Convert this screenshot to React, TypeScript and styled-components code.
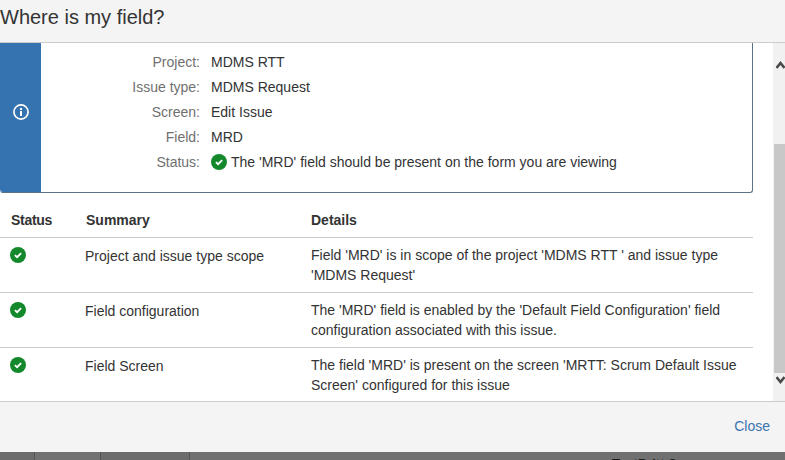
import React from 'react';
import styled, { createGlobalStyle } from 'styled-components';

const GlobalStyle = createGlobalStyle`
  html, body {
    margin: 0;
    padding: 0;
    height: 460px;
    overflow: hidden;
    background: #6f6f6f;
    font-family: "Liberation Sans", Arial, sans-serif;
  }
`;

const Dialog = styled.div`
  width: 785px;
  height: 460px;
  display: flex;
  flex-direction: column;
  overflow: hidden;
`;

const Header = styled.header`
  height: 42px;
  flex: none;
  background: #f4f4f4;
  border-bottom: 1px solid #cccccc;
  display: flex;
  align-items: flex-start;
`;

const Title = styled.h1`
  margin: 0;
  font-size: 20px;
  font-weight: 400;
  line-height: 34px;
  color: #333333;
`;

const Body = styled.div`
  height: 358px;
  flex: none;
  display: flex;
  background: #ffffff;
`;

const Content = styled.main`
  width: 753px;
  flex: none;
`;

const Message = styled.section`
  height: 150px;
  box-sizing: border-box;
  display: flex;
  border: solid #5b7186;
  border-width: 0 1px 1px 0;
  border-radius: 0 0 3px 3px;
`;

const MessageIcon = styled.div`
  width: 41px;
  flex: none;
  box-sizing: border-box;
  padding: 0 0 12px 1px;
  background: #3572b0;
  border-radius: 0 0 0 3px;
  display: flex;
  align-items: center;
  justify-content: center;
  color: #ffffff;
`;

const Facts = styled.dl`
  margin: 6px 0 0;
  display: grid;
  grid-template-columns: 159px 1fr;
  grid-auto-rows: 25px;
  column-gap: 11px;
  align-items: center;
  font-size: 14px;
`;

const FactLabel = styled.dt`
  text-align: right;
  color: #707070;
`;

const FactValue = styled.dd`
  margin: 0;
  color: #333333;
  display: flex;
  align-items: center;
  gap: 4px;
`;

const Table = styled.table`
  width: 753px;
  margin-top: 17px;
  border-collapse: collapse;
  table-layout: fixed;
  font-size: 14px;
  color: #333333;
`;

const HeadCell = styled.th<{ $tight?: boolean }>`
  height: 27px;
  box-sizing: border-box;
  padding: 0 0 7px 11px;
  text-align: left;
  vertical-align: top;
  line-height: 20px;
  font-weight: 700;
  letter-spacing: ${({ $tight }) => ($tight ? '-0.3px' : 'normal')};
  border-bottom: 1px solid #cccccc;
`;

const Row = styled.tr`
  border-bottom: 1px solid #cccccc;

  &:last-child {
    border-bottom: 0;
  }
`;

const Cell = styled.td<{ $indent?: number; $top?: number }>`
  height: 55px;
  box-sizing: border-box;
  padding: ${({ $top }) => $top ?? 7}px 10px 0 ${({ $indent }) => $indent ?? 10}px;
  vertical-align: top;
  line-height: 20px;

  svg {
    display: block;
    margin-top: 2px;
  }
`;

const Scrollbar = styled.div`
  margin-left: 20px;
  width: 12px;
  flex: none;
  box-sizing: border-box;
  padding-left: 1px;
  background: #f1f1f1;
  color: #4a4a4a;
  display: flex;
  flex-direction: column;
`;

const ScrollArrow = styled.div<{ $height: number; $top: number }>`
  height: ${({ $height }) => $height}px;
  flex: none;
  box-sizing: border-box;
  padding: ${({ $top }) => $top}px 0 0 2px;

  svg {
    display: block;
  }
`;

const ScrollThumb = styled.div`
  height: 229px;
  flex: none;
  background: #c8c8c8;
`;

const Footer = styled.footer`
  height: 51px;
  flex: none;
  box-sizing: border-box;
  background: #f4f4f4;
  border-top: 1px solid #cccccc;
  display: flex;
  align-items: center;
  justify-content: flex-end;
  padding: 0 15px 3px 0;
`;

const CloseLink = styled.a`
  font-size: 14px;
  color: #3b73af;
  text-decoration: none;
`;

const Backdrop = styled.div`
  flex: 1;
  display: flex;
  background: #707070;
  overflow: hidden;
`;

const BackdropCell = styled.div<{ $width: number; $tone: string }>`
  width: ${({ $width }) => $width}px;
  flex: none;
  box-sizing: border-box;
  background: ${({ $tone }) => $tone};
  border-right: 1px solid #555555;
`;

const BackdropText = styled.span`
  margin-left: 422px;
  padding-top: 4px;
  font-size: 13px;
  font-weight: 700;
  line-height: 15px;
  white-space: nowrap;
  color: #1c1c1c;
`;

const InfoIcon = () => (
  <svg width="16" height="16" viewBox="0 0 16 16" fill="none">
    <circle cx="8" cy="8" r="7.1" stroke="currentColor" strokeWidth="1.7" />
    <rect x="7" y="7" width="2" height="5" fill="currentColor" />
    <rect x="7" y="4" width="2" height="2" fill="currentColor" />
  </svg>
);

const CheckIcon = () => (
  <svg width="16" height="16" viewBox="0 0 16 16">
    <circle cx="8" cy="8" r="8" fill="#14892c" />
    <path d="M4.9 8.1 7.1 10.2 11.1 6.2" fill="none" stroke="#ffffff" strokeWidth="1.9" />
  </svg>
);

const Chevron = ({ up }: { up?: boolean }) => (
  <svg width="9" height="9" viewBox="0 0 9 9" fill="none">
    <path d={up ? 'M0.5 8 4.5 3 8.5 8' : 'M0.5 1 4.5 6 8.5 1'} stroke="currentColor" strokeWidth="2.6" />
  </svg>
);

const facts = [
  { label: 'Project:', value: 'MDMS RTT' },
  { label: 'Issue type:', value: 'MDMS Request' },
  { label: 'Screen:', value: 'Edit Issue' },
  { label: 'Field:', value: 'MRD' },
];

const rows = [
  {
    summary: 'Project and issue type scope',
    details: "Field 'MRD' is in scope of the project 'MDMS RTT ' and issue type 'MDMS Request'",
  },
  {
    summary: 'Field configuration',
    details: "The 'MRD' field is enabled by the 'Default Field Configuration' field configuration associated with this issue.",
  },
  {
    summary: 'Field Screen',
    details: "The field 'MRD' is present on the screen 'MRTT: Scrum Default Issue Screen' configured for this issue",
  },
];

export default function App() {
  return (
    <Dialog>
      <GlobalStyle />
      <Header>
        <Title>Where is my field?</Title>
      </Header>
      <Body>
        <Content>
          <Message>
            <MessageIcon>
              <InfoIcon />
            </MessageIcon>
            <Facts>
              {facts.map((fact) => (
                <React.Fragment key={fact.label}>
                  <FactLabel>{fact.label}</FactLabel>
                  <FactValue>{fact.value}</FactValue>
                </React.Fragment>
              ))}
              <FactLabel>Status:</FactLabel>
              <FactValue>
                <CheckIcon />
                The 'MRD' field should be present on the form you are viewing
              </FactValue>
            </Facts>
          </Message>
          <Table>
            <colgroup>
              <col style={{ width: 75 }} />
              <col style={{ width: 225 }} />
              <col />
            </colgroup>
            <thead>
              <tr>
                <HeadCell $tight>Status</HeadCell>
                <HeadCell>Summary</HeadCell>
                <HeadCell>Details</HeadCell>
              </tr>
            </thead>
            <tbody>
              {rows.map((row) => (
                <Row key={row.summary}>
                  <Cell $indent={10}>
                    <CheckIcon />
                  </Cell>
                  <Cell $indent={10} $top={8}>{row.summary}</Cell>
                  <Cell $indent={11}>{row.details}</Cell>
                </Row>
              ))}
            </tbody>
          </Table>
        </Content>
        <Scrollbar>
          <ScrollArrow $height={101} $top={17}>
            <Chevron up />
          </ScrollArrow>
          <ScrollThumb />
          <ScrollArrow $height={28} $top={3}>
            <Chevron />
          </ScrollArrow>
        </Scrollbar>
      </Body>
      <Footer>
        <CloseLink href="#">Close</CloseLink>
      </Footer>
      <Backdrop>
        <BackdropCell $width={35} $tone="#6c6c6c" />
        <BackdropCell $width={66} $tone="#727272" />
        <BackdropCell $width={89} $tone="#6c6c6c" />
        <BackdropText>TestBritt S</BackdropText>
      </Backdrop>
    </Dialog>
  );
}
